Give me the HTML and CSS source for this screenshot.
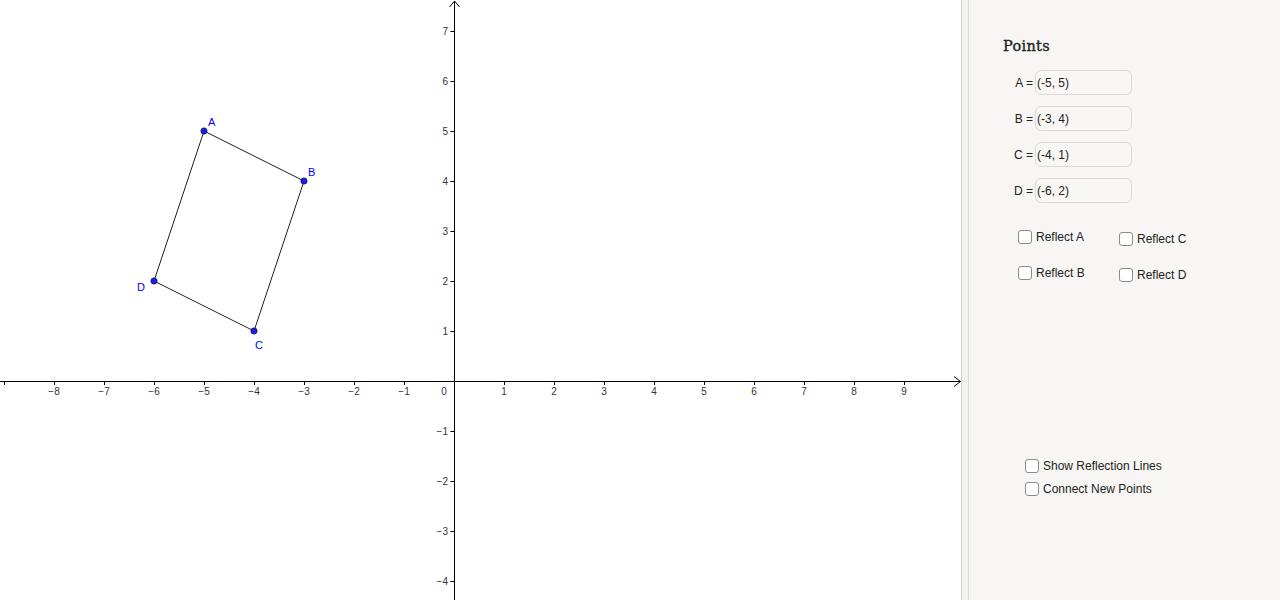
FILE: index.html
```html
<!DOCTYPE html>
<html>
<head>
<meta charset="utf-8">
<link rel="stylesheet" href="styles.css">
</head>
<body>
<div class="app">
  <div class="graph">
    <svg width="961" height="600" viewBox="0 0 961 600" xmlns="http://www.w3.org/2000/svg">
      <g class="axes" stroke="#000" stroke-width="1" fill="none">
        <path d="M0 381.5 H960.5"/>
        <path d="M954 376.5 L960.5 381.5 L954 386.5"/>
        <path d="M454.5 600 V1"/>
        <path d="M449.5 7 L454.5 1 L459.5 7"/>
        <path d="M4.5 381 v4 M54.5 381 v4 M104.5 381 v4 M154.5 381 v4 M204.5 381 v4 M254.5 381 v4 M304.5 381 v4 M354.5 381 v4 M404.5 381 v4 M504.5 381 v4 M554.5 381 v4 M604.5 381 v4 M654.5 381 v4 M704.5 381 v4 M754.5 381 v4 M804.5 381 v4 M854.5 381 v4 M904.5 381 v4"/>
        <path d="M450.5 31.5 h4 M450.5 81.5 h4 M450.5 131.5 h4 M450.5 181.5 h4 M450.5 231.5 h4 M450.5 281.5 h4 M450.5 331.5 h4 M450.5 431.5 h4 M450.5 481.5 h4 M450.5 531.5 h4 M450.5 581.5 h4"/>
      </g>
      <g class="ticklabels" text-anchor="middle">
        <text x="54" y="395">−8</text>
        <text x="104" y="395">−7</text>
        <text x="154" y="395">−6</text>
        <text x="204" y="395">−5</text>
        <text x="254" y="395">−4</text>
        <text x="304" y="395">−3</text>
        <text x="354" y="395">−2</text>
        <text x="404" y="395">−1</text>
        <text x="444" y="395">0</text>
        <text x="504" y="395">1</text>
        <text x="554" y="395">2</text>
        <text x="604" y="395">3</text>
        <text x="654" y="395">4</text>
        <text x="704" y="395">5</text>
        <text x="754" y="395">6</text>
        <text x="804" y="395">7</text>
        <text x="854" y="395">8</text>
        <text x="904" y="395">9</text>
      </g>
      <g class="ticklabels" text-anchor="end">
        <text x="448" y="35">7</text>
        <text x="448" y="85">6</text>
        <text x="448" y="135">5</text>
        <text x="448" y="185">4</text>
        <text x="448" y="235">3</text>
        <text x="448" y="285">2</text>
        <text x="448" y="335">1</text>
        <text x="448" y="435">−1</text>
        <text x="448" y="485">−2</text>
        <text x="448" y="535">−3</text>
        <text x="448" y="585">−4</text>
      </g>
      <polygon points="204,131 304,181 254,331 154,281" fill="none" stroke="#222" stroke-width="1"/>
      <g class="pts" fill="#1a1aff" stroke="#1a1a4a" stroke-width="0.9">
        <circle cx="204" cy="131" r="3.1"/>
        <circle cx="304" cy="181" r="3.1"/>
        <circle cx="254" cy="331" r="3.1"/>
        <circle cx="154" cy="281" r="3.1"/>
      </g>
      <g class="ptlabels">
        <text x="208" y="126">A</text>
        <text x="308" y="176">B</text>
        <text x="255" y="349">C</text>
        <text x="137" y="291">D</text>
      </g>
    </svg>
  </div>
  <div class="divider"></div>
  <div class="panel">
    <div class="title">Points</div>
    <div class="inputs">
      <div class="row"><span class="lbl">A =</span><span class="box">(-5, 5)</span></div>
      <div class="row"><span class="lbl">B =</span><span class="box">(-3, 4)</span></div>
      <div class="row"><span class="lbl">C =</span><span class="box">(-4, 1)</span></div>
      <div class="row"><span class="lbl">D =</span><span class="box">(-6, 2)</span></div>
    </div>
    <div class="reflects">
      <label class="cb"><span class="chk"></span>Reflect A</label>
      <label class="cb col2"><span class="chk"></span>Reflect C</label>
      <label class="cb"><span class="chk"></span>Reflect B</label>
      <label class="cb col2"><span class="chk"></span>Reflect D</label>
    </div>
    <div class="options">
      <label class="cb"><span class="chk"></span>Show Reflection Lines</label>
      <label class="cb"><span class="chk"></span>Connect New Points</label>
    </div>
  </div>
</div>
</body>
</html>
```
FILE: styles.css
```css
html, body {
  margin: 0;
  padding: 0;
  background: #fff;
}
.app {
  display: flex;
  width: 1280px;
  height: 600px;
  overflow: hidden;
  font-family: "Liberation Sans", Arial, sans-serif;
}
.graph {
  width: 961px;
  height: 600px;
  flex: none;
  background: #fff;
}
.graph svg {
  display: block;
}
.ticklabels text {
  font-family: "Liberation Sans", Arial, sans-serif;
  font-size: 10px;
  fill: #333;
}
.ptlabels text {
  font-family: "Liberation Sans", Arial, sans-serif;
  font-size: 11px;
  fill: #0000ff;
}
.divider {
  flex: none;
  width: 8px;
  box-sizing: border-box;
  border-left: 1px solid #d2d2d2;
  border-right: 1px solid #d9d9d9;
  background: #f3f2f0;
}
.panel {
  flex: 1;
  background: #f7f6f4;
  padding: 37px 0 0 34px;
  box-sizing: border-box;
  color: #222;
  font-size: 12px;
}
.title {
  font-family: "DejaVu Serif", "Liberation Serif", serif;
  font-size: 14.5px;
  line-height: 18px;
  color: #1e1e1e;
  letter-spacing: 0.3px;
  -webkit-text-stroke: 0.35px #1e1e1e;
}
.inputs {
  margin-top: 15px;
  display: flex;
  flex-direction: column;
  gap: 11px;
}
.row {
  display: flex;
  align-items: center;
  gap: 2px;
  height: 25px;
}
.lbl {
  width: 30px;
  text-align: right;
  white-space: nowrap;
}
.box {
  width: 97px;
  height: 25px;
  box-sizing: border-box;
  border: 1px solid #d9d9d9;
  border-radius: 6px;
  background: #f8f7f5;
  padding-left: 1px;
  display: flex;
  align-items: center;
}
.reflects {
  margin-top: 27px;
  margin-left: 15px;
  display: grid;
  grid-template-columns: 101px 100px;
  row-gap: 20px;
}
.cb {
  display: flex;
  align-items: center;
  gap: 4px;
  height: 14px;
  white-space: nowrap;
}
.col2 {
  margin-top: 2px;
}
.chk {
  width: 14px;
  height: 14px;
  box-sizing: border-box;
  border: 1.4px solid #8c8c8c;
  border-radius: 3px;
  background: #fff;
  flex: none;
}
.options {
  margin-top: 177px;
  margin-left: 22px;
  display: flex;
  flex-direction: column;
  gap: 9px;
}
```
